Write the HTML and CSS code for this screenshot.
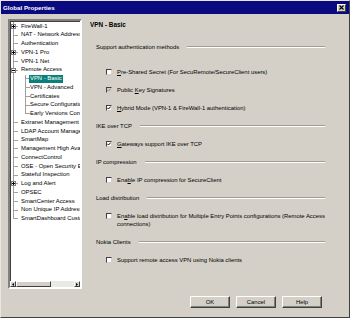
FILE: index.html
```html
<!DOCTYPE html>
<html>
  <head>
    <title>Global Properties</title>
    <link rel="stylesheet" href="styles.css">
  </head>
  <body>
    <div class="window">
      <div class="titlebar">
        <span class="title">Global Properties</span>
        <span class="close">
          <svg width="5" height="5" viewBox="0 0 5 5"><path d="M0.5 0.5L4.5 4.5M4.5 0.5L0.5 4.5" stroke="#000" stroke-width="1.1"/></svg>
        </span>
      </div>

      <div class="main">
        <!-- left: settings tree -->
        <div class="tree">
          <div class="tree-items">
            <div class="node has-toggle"><span class="toggle plus"></span><span class="label">FireWall-1</span></div>
            <div class="node"><span class="label">NAT - Network Address Translation</span></div>
            <div class="node"><span class="label">Authentication</span></div>
            <div class="node has-toggle"><span class="toggle plus"></span><span class="label">VPN-1 Pro</span></div>
            <div class="node"><span class="label">VPN-1 Net</span></div>
            <div class="node has-toggle"><span class="toggle"></span><span class="label">Remote Access</span></div>
            <div class="node child"><span class="label selected">VPN - Basic</span></div>
            <div class="node child"><span class="label">VPN - Advanced</span></div>
            <div class="node child"><span class="label">Certificates</span></div>
            <div class="node child"><span class="label">Secure Configuration Verification</span></div>
            <div class="node child last-child"><span class="label">Early Versions Compatibility</span></div>
            <div class="node"><span class="label">Extranet Management Interface</span></div>
            <div class="node"><span class="label">LDAP Account Management</span></div>
            <div class="node"><span class="label">SmartMap</span></div>
            <div class="node"><span class="label">Management High Availability</span></div>
            <div class="node"><span class="label">ConnectControl</span></div>
            <div class="node"><span class="label">OSE - Open Security Extension</span></div>
            <div class="node"><span class="label">Stateful Inspection</span></div>
            <div class="node has-toggle"><span class="toggle plus"></span><span class="label">Log and Alert</span></div>
            <div class="node"><span class="label">OPSEC</span></div>
            <div class="node"><span class="label">SmartCenter Access</span></div>
            <div class="node"><span class="label">Non Unique IP Address Ranges</span></div>
            <div class="node last"><span class="label">SmartDashboard Customization</span></div>
          </div>
          <div class="hscroll">
            <span class="arrow"><svg width="2" height="3" viewBox="0 0 2 3"><path d="M2 0L0 1.5L2 3Z" fill="#000"/></svg></span>
            <span class="thumb"></span>
            <span class="track"></span>
            <span class="arrow"><svg width="2" height="3" viewBox="0 0 2 3"><path d="M0 0L2 1.5L0 3Z" fill="#000"/></svg></span>
          </div>
        </div>

        <!-- right: page -->
        <div class="page">
          <div class="heading">VPN - Basic</div>

          <div class="group-title first"><span>Support authentication methods</span><span class="rule"></span></div>
          <div class="options first">
            <div class="option"><span class="check"></span><span><u>P</u>re-Shared Secret (For SecuRemote/SecureClient users)</span></div>
            <div class="option"><span class="check disabled"><svg width="4" height="4" viewBox="0 0 4 4"><path d="M0.3 1.8L1.5 3L3.7 0.6" stroke="#808080" stroke-width="1" fill="none"/></svg></span><span>Public <u>K</u>ey Signatures</span></div>
            <div class="option"><span class="check"><svg width="4" height="4" viewBox="0 0 4 4"><path d="M0.3 1.8L1.5 3L3.7 0.6" stroke="#000" stroke-width="1" fill="none"/></svg></span><span><u>H</u>ybrid Mode (VPN-1 &amp; FireWall-1 authentication)</span></div>
          </div>

          <div class="group-title"><span>IKE over TCP</span><span class="rule"></span></div>
          <div class="options">
            <div class="option"><span class="check"><svg width="4" height="4" viewBox="0 0 4 4"><path d="M0.3 1.8L1.5 3L3.7 0.6" stroke="#000" stroke-width="1" fill="none"/></svg></span><span><u>G</u>ateways support IKE over TCP</span></div>
          </div>

          <div class="group-title"><span>IP compression</span><span class="rule"></span></div>
          <div class="options">
            <div class="option"><span class="check"></span><span>Ena<u>b</u>le IP compression for SecureClient</span></div>
          </div>

          <div class="group-title"><span>Load distribution</span><span class="rule"></span></div>
          <div class="options">
            <div class="option"><span class="check"></span><span>En<u>a</u>ble load distribution for Multiple Entry Points configurations (Remote Access<br>connections)</span></div>
          </div>

          <div class="group-title"><span>Nokia Clients</span><span class="rule"></span></div>
          <div class="options">
            <div class="option"><span class="check"></span><span>Support remote access VPN using Nokia clients</span></div>
          </div>
        </div>
      </div>

      <div class="buttons">
        <button class="btn">OK</button>
        <button class="btn">Cancel</button>
        <button class="btn">Help</button>
      </div>
    </div>
  </body>
</html>
```

FILE: styles.css
```css
*{
  margin:0;
  padding:0;
  box-sizing:border-box;
}

body{
  width:350px;
  height:318px;
  background-color:#d4d0c8;
  font-family:"Liberation Sans", Arial, sans-serif;
  font-size:5.9px;
  color:#000;
  overflow:hidden;
}

.window{
  width:350px;
  height:318px;
  background-color:#d4d0c8;
  border:1px solid;
  border-color:#e8e6e0 #404040 #404040 #e8e6e0;
  display:flex;
  flex-direction:column;
}

/* ---------- title bar ---------- */
.titlebar{
  height:13px;
  background-color:#0a0a80;
  display:flex;
  align-items:center;
  justify-content:space-between;
  padding:0 3px 0 2px;
}

.title{
  color:#fff;
  font-weight:bold;
  font-size:6.2px;
}

.close{
  width:9px;
  height:8px;
  background-color:#d4d0c8;
  border:1px solid;
  border-color:#fff #404040 #404040 #fff;
  display:flex;
  align-items:center;
  justify-content:center;
}

.close svg{
  display:block;
}

/* ---------- main area ---------- */
.main{
  display:flex;
  margin-top:5px;
  padding-left:7px;
  height:270px;
}

.tree{
  width:74px;
  height:270px;
  background-color:#fff;
  border:2px solid;
  border-color:#808080 #fff #fff #808080;
  box-shadow:inset 1px 1px 0 #404040;
  display:flex;
  flex-direction:column;
}

.tree-items{
  flex:1;
  overflow:hidden;
  padding-top:1px;
}

.node{
  --ln:#a0a0a0;
  height:8.75px;
  display:flex;
  align-items:center;
  white-space:nowrap;
  padding-left:10px;
  background-image:linear-gradient(var(--ln),var(--ln)),linear-gradient(var(--ln),var(--ln));
  background-repeat:no-repeat;
  background-position:3px 0, 3px 50%;
  background-size:1px 100%, 5px 1px;
}

.node.last{
  background-size:1px 50%, 5px 1px;
}

.node.has-toggle{
  padding-left:1px;
}

.node.child{
  padding-left:19px;
  background-image:linear-gradient(var(--ln),var(--ln)),linear-gradient(var(--ln),var(--ln)),linear-gradient(var(--ln),var(--ln));
  background-position:3px 0, 15px 0, 15px 50%;
  background-size:1px 100%, 1px 100%, 5px 1px;
}

.node.child.last-child{
  background-size:1px 100%, 1px 50%, 5px 1px;
}

.toggle{
  width:5px;
  height:5px;
  margin-right:4px;
  border:1px solid #808080;
  background-color:#fff;
  background-image:linear-gradient(#000,#000);
  background-repeat:no-repeat;
  background-position:0 1px;
  background-size:3px 1px;
  flex-shrink:0;
}

.toggle.plus{
  background-image:linear-gradient(#000,#000),linear-gradient(#000,#000);
  background-position:0 1px, 1px 0;
  background-size:3px 1px, 1px 3px;
}

.label{
  padding:0 1px;
  line-height:7.5px;
}

.label.selected{
  background-color:#0a8078;
  color:#fff;
}

.hscroll{
  height:6px;
  display:flex;
  background-color:#ebe9e4;
}

.hscroll .arrow{
  width:6px;
  height:6px;
  background-color:#d4d0c8;
  border:1px solid;
  border-color:#fff #404040 #404040 #fff;
  display:flex;
  align-items:center;
  justify-content:center;
  flex-shrink:0;
}

.hscroll .arrow svg{
  display:block;
}

.hscroll .thumb{
  width:35px;
  height:6px;
  background-color:#d4d0c8;
  border:1px solid;
  border-color:#fff #404040 #404040 #fff;
}

.hscroll .track{
  flex:1;
}

/* ---------- page ---------- */
.page{
  flex:1;
  margin-left:8px;
  padding-right:28px;
}

.heading{
  height:12px;
  line-height:12px;
  font-weight:bold;
  font-size:6.4px;
}

.group-title{
  height:18px;
  display:flex;
  align-items:center;
  padding-left:6px;
  white-space:nowrap;
}

.group-title.first{
  margin-top:7px;
}

.rule{
  flex:1;
  margin-left:8px;
  height:2px;
  border-top:1px solid #a09c94;
  border-bottom:1px solid #fff;
}

.options.first{
  margin-top:7px;
}

.option{
  display:flex;
  align-items:flex-start;
  padding:5px 0 5px 16px;
  line-height:8px;
  white-space:nowrap;
}

.check{
  width:6px;
  height:6px;
  margin-top:1px;
  margin-right:5px;
  flex-shrink:0;
  background-color:#fff;
  border:1px solid;
  border-color:#404040 #d4d0c8 #d4d0c8 #404040;
  display:flex;
  align-items:center;
  justify-content:center;
}

.check.disabled{
  background-color:#d4d0c8;
}

.check svg{
  display:block;
}

/* ---------- buttons ---------- */
.buttons{
  display:flex;
  justify-content:flex-end;
  gap:6px;
  margin-top:7px;
  padding-right:27px;
}

.btn{
  width:40px;
  height:12px;
  font-family:"Liberation Sans", Arial, sans-serif;
  font-size:5.9px;
  color:#000;
  background-color:#d4d0c8;
  border:1px solid;
  border-color:#fff #404040 #404040 #fff;
  box-shadow:inset -1px -1px 0 #808080;
}
```
